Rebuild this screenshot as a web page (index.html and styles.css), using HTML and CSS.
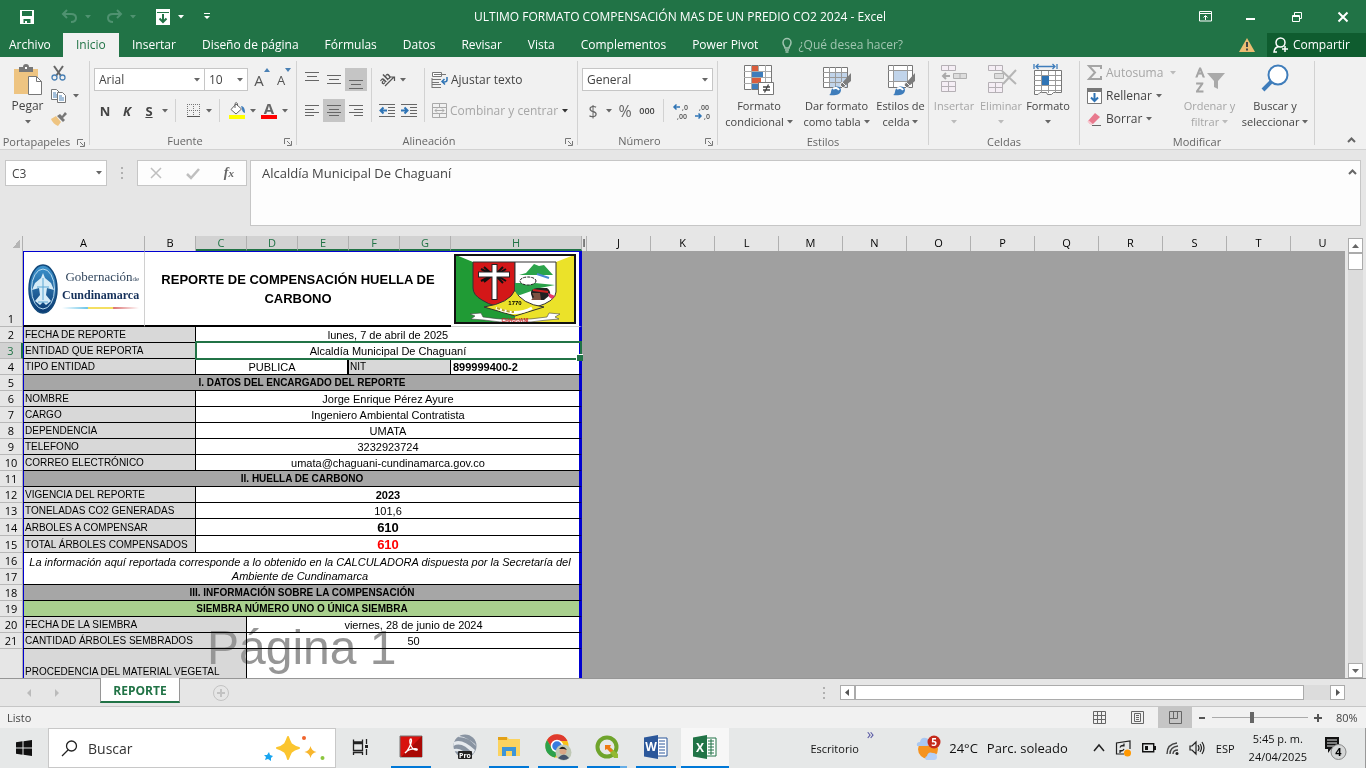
FILE: index.html
```
<!DOCTYPE html>
<html lang="es">
<head>
  <meta charset="UTF-8" />
  <meta name="viewport" content="width=device-width, initial-scale=1" />
  <title>ULTIMO FORMATO COMPENSACIÓN MAS DE UN PREDIO CO2 2024 - Excel</title>
  <link rel="stylesheet" href="styles.css">
</head>
<body>
  <!-- Shared icons -->
  <svg class="sprite" aria-hidden="true">
    <symbol id="down" viewBox="0 0 6 4"><path d="M0 0h6L3 3.500z" fill="currentColor"/></symbol>
    <symbol id="launcher" viewBox="0 0 8 8"><path d="M.5 6V.5H6M3 3l3.500 3.500M7.500 3v4.500H3" fill="none" stroke="#777"/></symbol>
    <symbol id="brush" viewBox="0 0 30 30"><path d="M28 7v8l-6 5-3-3z" fill="#7d7d7d"/><path d="M19 16l4 4-3 2-3-3z" fill="#777" stroke="#f1f1f1"/><path d="M6 29c3-1 1-5 4-7 4-3 8-1 8 2 0 5-7 6-12 5z" fill="#3f7dbb"/><path d="M10 23c2-2 5-1 6 1" stroke="#fff" stroke-width="2" fill="none"/></symbol>
  </svg>

  <div class="app">
    <header class="titlebar">
      <div class="quick">
        <button class="q-save" aria-label="Guardar"><svg width="14" height="14" viewBox="0 0 14 14"><path d="M0 0h14v14H0z" fill="#fff"/><path d="M2 1h10v5H2zM3.500 9h7v4h-7z" fill="#217346"/><path d="M5 11h2v3H5z" fill="#fff"/></svg></button>
        <button class="q-undo" aria-label="Deshacer"><svg width="15" height="13" viewBox="0 0 15 13"><path d="M5 0L1 4l4 4M1 4h8q5 0 5 4t-5 4" fill="none" stroke="#4f9270" stroke-width="2"/></svg><svg class="dd dim"><use href="#down"/></svg></button>
        <button class="q-redo" aria-label="Rehacer"><svg width="15" height="13" viewBox="0 0 15 13"><path d="M10 0l4 4-4 4M14 4H6Q1 4 1 8t5 4" fill="none" stroke="#4f9270" stroke-width="2"/></svg><svg class="dd dim"><use href="#down"/></svg></button>
        <button class="q-down" aria-label="Rellenar"><svg width="14" height="16" viewBox="0 0 14 16"><path d="M0 0h14v16H0z" fill="#fff"/><path d="M1 3.500h12" stroke="#217346"/><path d="M7 5v8M3.500 9.500L7 13l3.500-3.500" fill="none" stroke="#217346" stroke-width="2"/></svg><svg class="dd"><use href="#down"/></svg></button>
        <button class="q-more" aria-label="Personalizar"><svg width="6" height="7" viewBox="0 0 6 7"><path d="M0 0h6v1H0zM0 3h6L3 6z" fill="#fff"/></svg></button>
      </div>
      <div class="doc-title">ULTIMO FORMATO COMPENSACIÓN MAS DE UN PREDIO CO2 2024 - Excel</div>
      <div class="window-buttons">
        <button aria-label="Opciones de cinta"><svg width="13" height="11" viewBox="0 0 13 11"><path d="M.5.5h12v9.500H.5zM.5 2.500h12M6.500 9V5M4.500 6.500l2-2 2 2" fill="none" stroke="#fff"/></svg></button>
        <button aria-label="Minimizar"><svg width="10" height="10" viewBox="0 0 10 10"><path d="M0 6h9v2H0z" fill="#fff"/></svg></button>
        <button aria-label="Restaurar"><svg width="10" height="10" viewBox="0 0 10 10"><path d="M.5 3.500h7v6h-7zM2.500 3V.5h7v6H8M0 4.500h8" fill="none" stroke="#fff"/></svg></button>
        <button aria-label="Cerrar"><svg width="10" height="10" viewBox="0 0 10 10"><path d="M.5.5l9 9M9.500.5l-9 9" stroke="#fff" stroke-width="2"/></svg></button>
      </div>
    </header>

    <nav class="tabs">
      <a href="#" class="file">Archivo</a>
      <a href="#" class="active">Inicio</a>
      <a href="#">Insertar</a>
      <a href="#">Diseño de página</a>
      <a href="#">Fórmulas</a>
      <a href="#">Datos</a>
      <a href="#">Revisar</a>
      <a href="#">Vista</a>
      <a href="#">Complementos</a>
      <a href="#">Power Pivot</a>
      <a href="#" class="tell"><svg width="10" height="15" viewBox="0 0 10 15"><path d="M3 10C3 8 1 7.500 1 4.500a4 4 0 018 0C9 7.500 7 8 7 10zM3 12h4M3.500 14h3" fill="none" stroke="#a0c5b0" stroke-width="1.500"/></svg>¿Qué desea hacer?</a>
      <span class="warn"><svg width="16" height="14" viewBox="0 0 16 14"><path d="M8 0l8 14H0z" fill="#edbd73"/><path d="M7 4h2v5H7zM7 10.500h2v2H7z" fill="#444"/></svg></span>
      <button class="share"><svg width="16" height="16" viewBox="0 0 16 16"><circle cx="7.500" cy="5.500" r="4.500" fill="none" stroke="#fff" stroke-width="1.500"/><path d="M5.500 9.500Q1.500 10.500 1 15h3M12 9v6M9 12h6" fill="none" stroke="#fff" stroke-width="1.500"/></svg>Compartir</button>
    </nav>

    <section class="ribbon">
      <div class="group g-clip">
        <div class="tools">
          <button class="big paste"><svg width="30" height="32" viewBox="0 0 30 32"><path d="M1 5h24v25H1z" fill="#eec481"/><path d="M6 8V3h4q0-3 3-3t3 3h4v5z" fill="#777"/><path d="M12 3h2v2h-2z" fill="#fff"/><path d="M15.500 12.500h8l5 5v13h-13z" fill="#fff" stroke="#777"/><path d="M23.500 12.500v5h5" fill="none" stroke="#777"/></svg><span>Pegar</span><svg class="dd"><use href="#down"/></svg></button>
          <div class="stack">
            <button aria-label="Cortar"><svg width="16" height="16" viewBox="0 0 16 16"><path d="M3 1l7 10M12 1L5 11" stroke="#666" stroke-width="2"/><circle cx="3.500" cy="12.500" r="2.500" fill="none" stroke="#4a80b4" stroke-width="1.300"/><circle cx="11.500" cy="12.500" r="2.500" fill="none" stroke="#4a80b4" stroke-width="1.300"/></svg></button>
            <button aria-label="Copiar"><svg width="16" height="14" viewBox="0 0 16 14"><path d="M.5.5h5l3 3v7h-8z" fill="#fff" stroke="#777"/><path d="M2 4h3M2 6h4M2 8h4" stroke="#4a80b4"/><path d="M6.500 3.500h5l3 3v7h-8z" fill="#fff" stroke="#777"/><path d="M8 7h3M8 9h5M8 11h5" stroke="#4a80b4"/></svg><svg class="dd"><use href="#down"/></svg></button>
            <button aria-label="Copiar formato"><svg width="16" height="14" viewBox="0 0 16 14"><path d="M0 7l5-3 5 6-3 4q-5-2-7-7z" fill="#eec481"/><path d="M6 4l6 6 2-2-2-2 4-4-2-2-3 4-2-2z" fill="#777"/></svg></button>
          </div>
        </div>
        <div class="caption">Portapapeles<svg class="launch"><use href="#launcher"/></svg></div>
      </div>

      <div class="group g-font">
        <div class="tools rows">
          <div class="row">
            <select class="box font-name" aria-label="Fuente"><option>Arial</option></select><select class="box font-size" aria-label="Tamaño"><option>10</option></select>
            <button class="grow" aria-label="Aumentar fuente">A<svg width="6" height="4" viewBox="0 0 6 4"><path d="M0 4h6L3 0z" fill="#4a80b4"/></svg></button>
            <button class="grow small" aria-label="Reducir fuente">A<svg width="6" height="4" viewBox="0 0 6 4"><path d="M0 0h6L3 4z" fill="#4a80b4"/></svg></button>
          </div>
          <div class="row">
            <button class="w22"><b>N</b></button><button class="w22"><b><i>K</i></b></button><button class="w22"><b><u>S</u></b></button><button class="w10"><svg class="dd"><use href="#down"/></svg></button>
            <i class="sep"></i>
            <button class="w22" aria-label="Bordes"><svg width="13" height="13" viewBox="0 0 13 13"><path d="M.5 0v12M6.500 0v12M12.500 0v12M0 .5h12M0 6.500h12" stroke="#777" stroke-dasharray="1 1" fill="none"/><path d="M0 12.500h13" stroke="#555"/></svg></button><button class="w10"><svg class="dd"><use href="#down"/></svg></button>
            <i class="sep"></i>
            <button class="w22" aria-label="Color de relleno"><svg width="17" height="17" viewBox="0 0 17 17"><path d="M7 2l5.500 5L7 12 2 7.500z" fill="#fff" stroke="#666"/><path d="M6 6V1.500Q7-.5 8.500 1.500V4" fill="none" stroke="#666"/><path d="M12 4q4 0 4 7-3-1-3-4z" fill="#3f7dbb"/><path d="M0 13h16v4H0z" fill="#ff0"/></svg></button><button class="w10"><svg class="dd"><use href="#down"/></svg></button>
            <button class="w22 font-color"><b>A</b></button><button class="w10"><svg class="dd"><use href="#down"/></svg></button>
          </div>
        </div>
        <div class="caption">Fuente<svg class="launch"><use href="#launcher"/></svg></div>
      </div>

      <div class="group g-align">
        <div class="tools">
          <div class="rows">
            <div class="row">
              <button class="w22" aria-label="Superior"><svg width="14" height="20" viewBox="0 0 14 20"><path d="M0 2.500h14M2 6.500h10M0 10.500h14" stroke="#666"/></svg></button>
              <button class="w22" aria-label="Medio"><svg width="14" height="9" viewBox="0 0 14 9"><path d="M0 .5h14M2 4.500h10M0 8.500h14" stroke="#666"/></svg></button>
              <button class="w22 on" aria-label="Inferior"><svg width="14" height="20" viewBox="0 0 14 20"><path d="M0 10.500h14M2 14.500h10M0 18.500h14" stroke="#666"/></svg></button>
            </div>
            <div class="row">
              <button class="w22" aria-label="Izquierda"><svg width="14" height="13" viewBox="0 0 14 13"><path d="M0 1.500h14M0 5.500h9M0 8.500h14M0 11.500h9" stroke="#666"/></svg></button>
              <button class="w22 on" aria-label="Centrar"><svg width="14" height="13" viewBox="0 0 14 13"><path d="M0 1.500h14M2 5.500h10M0 8.500h14M2 11.500h10" stroke="#666"/></svg></button>
              <button class="w22" aria-label="Derecha"><svg width="14" height="13" viewBox="0 0 14 13"><path d="M0 1.500h14M5 5.500h9M0 8.500h14M5 11.500h9" stroke="#666"/></svg></button>
            </div>
          </div>
          <i class="sep tall"></i>
          <div class="rows">
            <div class="row">
              <button class="w22" aria-label="Orientación"><svg width="17" height="17" viewBox="0 0 17 17"><text x="0" y="11" transform="rotate(-45 6 8)" font-size="10" font-weight="bold" fill="#555">ab</text><path d="M6 15L15 6M11 6h4.500v4" fill="none" stroke="#555" stroke-width="1.200"/></svg></button><button class="w10"><svg class="dd"><use href="#down"/></svg></button>
            </div>
            <div class="row">
              <button class="w22" aria-label="Disminuir sangría"><svg width="16" height="13" viewBox="0 0 16 13"><path d="M0 .5h16M9 3.500h7M9 6.500h7M9 9.500h7M0 12.500h16" stroke="#666"/><path d="M8 6.500H2M4.500 3.500l-3 3 3 3" fill="none" stroke="#2f74b5" stroke-width="2"/></svg></button>
              <button class="w22" aria-label="Aumentar sangría"><svg width="16" height="13" viewBox="0 0 16 13"><path d="M0 .5h16M9 3.500h7M9 6.500h7M9 9.500h7M0 12.500h16" stroke="#666"/><path d="M0 6.500h6M3.500 3.500l3 3-3 3" fill="none" stroke="#2f74b5" stroke-width="2"/></svg></button>
            </div>
          </div>
          <i class="sep tall"></i>
          <div class="rows">
            <div class="row">
              <button class="labelled"><svg width="16" height="16" viewBox="0 0 16 16"><path d="M.5.500h9v4h-9z" fill="#fff" stroke="#777"/><path d="M2 2.500h12M0 7.500h9M0 10.500h7M0 12.500h9M0 15.500h9M0 6v10" stroke="#777"/><path d="M15 5v3q0 2-3 2h-2M12.500 7L10 9.500l3 3" fill="none" stroke="#2f74b5" stroke-width="1.500"/></svg>Ajustar texto</button>
            </div>
            <div class="row">
              <button class="labelled off"><svg width="15" height="15" viewBox="0 0 15 15"><path d="M.5.5h14v14H.5zM.5 4.500h14M.5 10.500h14M7.500 0v4M7.500 11v4M3 7.500h9M5 5.500l-2 2 2 2M10 5.500l2 2-2 2" fill="none" stroke="#aaa"/></svg>Combinar y centrar</button><button class="w10"><svg class="dd dark"><use href="#down"/></svg></button>
            </div>
          </div>
        </div>
        <div class="caption">Alineación<svg class="launch"><use href="#launcher"/></svg></div>
      </div>

      <div class="group g-number">
        <div class="tools rows">
          <div class="row"><select class="box format" aria-label="Formato de número"><option>General</option></select></div>
          <div class="row">
            <button class="w22 sign">$</button><button class="w10"><svg class="dd"><use href="#down"/></svg></button>
            <button class="w22 sign">%</button><button class="w22 zeros">000</button>
            <i class="sep"></i>
            <button class="w22 decimals"><svg width="17" height="18" viewBox="0 0 17 18"><path d="M7 5H1M3.500 2.500L1 5l2.500 2.500" fill="none" stroke="#2f74b5" stroke-width="1.500"/><text x="9" y="8">,0</text><text x="4" y="17">,00</text></svg></button>
            <button class="w22 decimals"><svg width="17" height="18" viewBox="0 0 17 18"><path d="M0 14h6M3.500 11.500L6 14l-2.500 2.500" fill="none" stroke="#2f74b5" stroke-width="1.500"/><text x="4" y="8">,00</text><text x="9" y="17">,0</text></svg></button>
          </div>
        </div>
        <div class="caption">Número<svg class="launch"><use href="#launcher"/></svg></div>
      </div>

      <div class="group g-styles">
        <div class="tools">
          <button class="big"><svg width="30" height="32" viewBox="0 0 30 32"><path d="M.5 1.500h27v24H.5z" fill="#fff" stroke="#777"/><path d="M7.500 1v25M14.500 1v25M21.500 1v25M0 7.500h27M0 13.500h27M0 19.500h27" stroke="#aaa"/><path d="M8 2h6v5H8zM8 14h9v5H8z" fill="#da5d3c"/><path d="M8 8h11v5H8zM8 20h6v5H8z" fill="#3f7dbb"/><path d="M14.500 18.500h15v12h-15z" fill="#fff" stroke="#777"/><path d="M19 23h7M19 26h7M24.500 20.500l-4 8" stroke="#444" stroke-width="1.300"/></svg><span>Formato<br>condicional <svg class="dd"><use href="#down"/></svg></span></button>
          <button class="big"><svg width="30" height="32" viewBox="0 0 30 32"><path d="M1.500 3.500h24v20h-24z" fill="#fff" stroke="#777"/><path d="M8 9h17v14H8z" fill="#c1d4ea"/><path d="M7.500 3v20M13.500 3v20M19.500 3v20M1 8.500h24M1 13.500h24M1 18.500h24" stroke="#999"/><use href="#brush" x="1" y="2" width="30" height="30"/></svg><span>Dar formato<br>como tabla <svg class="dd"><use href="#down"/></svg></span></button>
          <button class="big"><svg width="30" height="32" viewBox="0 0 30 32"><path d="M2.500 1.500h24v22h-24z" fill="#fff" stroke="#777"/><path d="M8 7h13v10H8z" fill="#c1d4ea"/><path d="M7.500 1v22M21.500 1v22M2 6.500h24M2 17.500h24" stroke="#999"/><use href="#brush" x="1" y="2" width="30" height="30"/></svg><span>Estilos de<br>celda <svg class="dd"><use href="#down"/></svg></span></button>
        </div>
        <div class="caption">Estilos</div>
      </div>

      <div class="group g-cells">
        <div class="tools">
          <button class="big off"><svg width="30" height="32" viewBox="0 0 30 32"><path d="M2.500 1.500h14v5h-14zM9.500 1v5M2.500 17.500h14v10h-14zM2.500 22.500h14M9.500 17v10" fill="#f5eef5" stroke="#b5b0b5"/><path d="M14.500 9.500h13v5h-13zM21 9v5" fill="#ddd" stroke="#b0b0b0"/><path d="M11 12H5M7 9l-3 3 3 3" fill="none" stroke="#aaa" stroke-width="2"/></svg><span>Insertar<br><svg class="dd"><use href="#down"/></svg></span></button>
          <button class="big off"><svg width="30" height="32" viewBox="0 0 30 32"><path d="M2.500 1.500h14v5h-14zM9.500 1v5M2.500 18.500h14v10h-14zM2.500 23.500h14M9.500 18v10" fill="#f5eef5" stroke="#b5b0b5"/><path d="M8.500 9.500h9v5h-9z" fill="#ddd" stroke="#b0b0b0"/><path d="M16 7l14 13M30 6L17 20" stroke="#b5b5b5" stroke-width="2"/></svg><span>Eliminar<br><svg class="dd"><use href="#down"/></svg></span></button>
          <button class="big"><svg width="30" height="32" viewBox="0 0 30 32"><path d="M1 0v5M24 0v5M3 2.500h19M5.500 0L3 2.500 5.500 5M19.500 0L22 2.500 19.500 5" fill="none" stroke="#3f7dbb" stroke-width="1.300"/><path d="M1.500 6.500h27v22h-8l-2 2h-4l-1-2H7l-2 2H1.500z" fill="#fff" stroke="#777"/><path d="M8.500 7v22M15.500 7v22M22.500 7v22M1 11.500h27M1 16.500h27M1 21.500h27M1 26.500h27" stroke="#999"/><path d="M9 12h7v9H9z" fill="#2f74b5"/></svg><span>Formato<br><svg class="dd"><use href="#down"/></svg></span></button>
        </div>
        <div class="caption">Celdas</div>
      </div>

      <div class="group g-edit">
        <div class="tools">
          <div class="stack list">
            <button class="off"><svg width="15" height="15" viewBox="0 0 15 15"><path d="M14 4V1H2l6 6.500L2 14h12v-3" fill="none" stroke="#a5a5a5" stroke-width="2"/></svg>Autosuma<svg class="dd wide"><use href="#down"/></svg></button>
            <button><svg width="15" height="16" viewBox="0 0 15 16"><path d="M.5.5h14v15H.5z" fill="#fff" stroke="#777"/><path d="M0 0h15v4H0z" fill="#777"/><path d="M7.500 5v8M4 9.500l3.500 3.500L11 9.500" fill="none" stroke="#2f74b5" stroke-width="2"/></svg>Rellenar<svg class="dd"><use href="#down"/></svg></button>
            <button><svg width="15" height="14" viewBox="0 0 15 14"><path d="M8 1l5 4-7 7H3L1 9z" fill="#e8798d"/><path d="M1 9l4 3.500" stroke="#f7c6cf" stroke-width="2"/><path d="M5 13.500h9" stroke="#666"/></svg>Borrar<svg class="dd"><use href="#down"/></svg></button>
          </div>
          <button class="big off"><svg width="30" height="32" viewBox="0 0 30 32"><text x="1" y="13" class="az">A</text><text x="1" y="28" class="az">Z</text><path d="M12 9h18l-7 8v8l-4-2v-6z" fill="#aaa"/></svg><span>Ordenar y<br>filtrar <svg class="dd"><use href="#down"/></svg></span></button>
          <button class="big"><svg width="30" height="32" viewBox="0 0 30 32"><path d="M12 17L3 26" stroke="#3f7dbb" stroke-width="4"/><circle cx="18" cy="11" r="9.500" fill="#fff" stroke="#3f7dbb" stroke-width="2"/></svg><span>Buscar y<br>seleccionar <svg class="dd"><use href="#down"/></svg></span></button>
        </div>
        <div class="caption">Modificar</div>
      </div>
      <button class="collapse" aria-label="Contraer"><svg width="9" height="6" viewBox="0 0 9 6"><path d="M1 5l3.500-3.500L8 5" fill="none" stroke="#666" stroke-width="2"/></svg></button>
    </section>

    <section class="formula-bar">
      <select class="box name-box" aria-label="Cuadro de nombres"><option>C3</option></select>
      <svg class="dots" width="2" height="12" viewBox="0 0 2 12"><path d="M0 1h2M0 6h2M0 11h2" stroke="#b0b0b0" stroke-width="2"/></svg>
      <div class="fx">
        <button aria-label="Cancelar"><svg width="12" height="10" viewBox="0 0 12 10"><path d="M1 0l10 10M11 0L1 10" stroke="#bfbfbf" stroke-width="1.500"/></svg></button>
        <button aria-label="Introducir"><svg width="14" height="11" viewBox="0 0 14 11"><path d="M1 6l4 4 8-9" fill="none" stroke="#bfbfbf" stroke-width="2.500"/></svg></button>
        <button class="fx-sign" aria-label="Insertar función">f<small>x</small></button>
      </div>
      <div class="formula">
        <input type="text" value="Alcaldía Municipal De Chaguaní" aria-label="Barra de fórmulas">
        <svg width="9" height="6" viewBox="0 0 9 6"><path d="M1 5l3.500-3.500L8 5" fill="none" stroke="#666" stroke-width="2"/></svg>
      </div>
    </section>

    <main class="workspace">
      <div class="sheet">
        <table>
          <colgroup>
            <col class="c-head"><col class="c-a"><col span="6" class="c-b"><col class="c-h"><col class="c-i"><col span="12" class="c-j">
          </colgroup>
          <thead>
            <tr>
              <th class="corner"></th><th>A</th><th>B</th><th class="sel">C</th><th class="sel">D</th><th class="sel">E</th><th class="sel">F</th><th class="sel">G</th><th class="sel">H</th><th class="tight">I</th><th>J</th><th>K</th><th>L</th><th>M</th><th>N</th><th>O</th><th>P</th><th>Q</th><th>R</th><th>S</th><th>T</th><th>U</th>
            </tr>
          </thead>
          <tbody>
            <tr class="r-title">
              <th>1</th>
              <td class="logo">
                <div class="brand">
                  <svg width="30" height="52" viewBox="0 0 30 52"><defs><linearGradient id="globe" x1="0" y1="0" x2="0" y2="1"><stop offset="0" stop-color="#3d95cf"/><stop offset="1" stop-color="#0b3a72"/></linearGradient></defs><ellipse cx="15" cy="26" rx="14" ry="24" fill="url(#globe)" stroke="#134a7c" stroke-width="1.500"/><ellipse cx="15" cy="26" rx="11.500" ry="20" fill="none" stroke="#b8dcf0"/><path d="M15 10l2 5 6 5 3 7-7-2-1 7 5 6-5 4-3-3-3 3-5-4 5-6-1-7-7 2 3-7 6-5z" fill="#d7ecf7"/><path d="M15 15v22M9 24h12M10 39h10" stroke="#5ba6d3"/></svg>
                  <div class="brand-text"><span>Gobernación<small>de</small></span><strong>Cundinamarca</strong><i></i></div>
                </div>
              </td>
              <td class="report-title" colspan="6">REPORTE DE COMPENSACIÓN HUELLA DE CARBONO</td>
              <td class="flag edge">
                <svg width="122" height="70" viewBox="0 0 122 70">
                  <path d="M0 0h61v70H0z" fill="#209b35"/><path d="M61 0h61v70H61z" fill="#ebe229"/>
                  <path d="M2 1h118l-18 7H19z" fill="#fff"/>
                  <path d="M19 8h42v47Q40 54 28 46 19 41 19 34z" fill="#d41718" stroke="#333"/>
                  <path d="M61 8h41v30q0 9-20 15l-21 3z" fill="#fff" stroke="#333"/>
                  <path d="M30 53Q56 49 61 36 67 50 90 53L61 62z" fill="#ebe229" stroke="#333"/>
                  <path d="M27 15l12 6-12 6M52 15l-10 6 10 6M30 13l9 8-9 7M49 13l-8 8 8 8" fill="none" stroke="#111" stroke-width="2"/>
                  <path d="M40.500 10v36M24 20.500h32" stroke="#222" stroke-width="6"/><path d="M40.500 11v34M25 20.500h30" stroke="#fff" stroke-width="4"/>
                  <path d="M65 21l7-2 8-9 5 2 5-1 9 10z" fill="#2ba34a"/><path d="M83 20l12 4" stroke="#4786d2" stroke-width="2"/>
                  <path d="M61 29h20l20 2-15 3-20 7q-4 0-5-5z" fill="#2ba34a"/><ellipse cx="74" cy="27" rx="8" ry="4" fill="#fff" stroke="#222" stroke-dasharray="3 1"/>
                  <path d="M77 40q-1-5 6-6l10 0q4 3 3 7l-6 5h-7l-4 0z" fill="#222"/><path d="M78 39h8l1 7h-10l3-3z" fill="#7c5142"/><path d="M79 36l15 2" stroke="#c22" stroke-width="2"/><path d="M94 39l7 3-3 3-3-2z" fill="#e8396b"/>
                  <path d="M42 54q19 9 36 0" stroke="#fff" stroke-width="3" fill="none"/><path d="M43 54q10 4 17 4" stroke="#b8a22a" stroke-width="2" stroke-dasharray="3 2" fill="none"/>
                  <path d="M16 60l11-1 2 4q32 5 64 0l2-4 11 1-5 3 4 2-12 1q-32 5-63 0l-13-1 4-3z" fill="#fff" stroke="#444" stroke-width=".6"/>
                  <text x="61" y="51" class="flag-year">1770</text><text x="61" y="68" class="flag-name">CHAGUANI</text>
                  <path d="M1 1h120v68H1z" fill="none" stroke="#111" stroke-width="2"/>
                </svg>
              </td>
              <td class="void" colspan="13" rowspan="22"></td>
            </tr>
            <tr><th>2</th><td class="label" colspan="2">FECHA DE REPORTE</td><td class="edge" colspan="6">lunes, 7 de abril de 2025</td></tr>
            <tr><th class="sel">3</th><td class="label" colspan="2">ENTIDAD QUE REPORTA</td><td class="edge current" colspan="6">Alcaldía Municipal De Chaguaní</td></tr>
            <tr><th>4</th><td class="label" colspan="2">TIPO ENTIDAD</td><td class="thick" colspan="3">PUBLICA</td><td class="label" colspan="2">NIT</td><td class="edge nit">899999400-2</td></tr>
            <tr><th>5</th><td class="section edge" colspan="8">I. DATOS DEL ENCARGADO DEL REPORTE</td></tr>
            <tr><th>6</th><td class="label" colspan="2">NOMBRE</td><td class="edge" colspan="6">Jorge Enrique Pérez Ayure</td></tr>
            <tr><th>7</th><td class="label" colspan="2">CARGO</td><td class="edge" colspan="6">Ingeniero Ambiental Contratista</td></tr>
            <tr><th>8</th><td class="label" colspan="2">DEPENDENCIA</td><td class="edge" colspan="6">UMATA</td></tr>
            <tr><th>9</th><td class="label" colspan="2">TELEFONO</td><td class="edge" colspan="6">3232923724</td></tr>
            <tr><th>10</th><td class="label" colspan="2">CORREO ELECTRÓNICO</td><td class="edge" colspan="6">umata@chaguani-cundinamarca.gov.co</td></tr>
            <tr><th>11</th><td class="section edge" colspan="8">II. HUELLA DE CARBONO</td></tr>
            <tr><th>12</th><td class="label" colspan="2">VIGENCIA DEL REPORTE</td><td class="edge" colspan="6"><b>2023</b></td></tr>
            <tr><th>13</th><td class="label" colspan="2">TONELADAS CO2 GENERADAS</td><td class="edge" colspan="6">101,6</td></tr>
            <tr class="r-total"><th>14</th><td class="label" colspan="2">ARBOLES A COMPENSAR</td><td class="edge total" colspan="6">610</td></tr>
            <tr class="r-total"><th>15</th><td class="label" colspan="2">TOTAL ÁRBOLES COMPENSADOS</td><td class="edge total red" colspan="6">610</td></tr>
            <tr><th>16</th><td class="note edge" colspan="8" rowspan="2">La información aquí reportada corresponde a lo obtenido en la CALCULADORA dispuesta por la Secretaría del Ambiente de Cundinamarca</td></tr>
            <tr><th>17</th></tr>
            <tr><th>18</th><td class="section edge" colspan="8">III. INFORMACIÓN SOBRE LA COMPENSACIÓN</td></tr>
            <tr><th>19</th><td class="section green edge" colspan="8">SIEMBRA NÚMERO UNO O ÚNICA SIEMBRA</td></tr>
            <tr><th>20</th><td class="label" colspan="3">FECHA DE LA SIEMBRA</td><td class="edge" colspan="5">viernes, 28 de junio de 2024</td></tr>
            <tr><th>21</th><td class="label" colspan="3">CANTIDAD ÁRBOLES SEMBRADOS</td><td class="edge" colspan="5">50</td></tr>
            <tr class="r-last"><th></th><td class="label" colspan="3">PROCEDENCIA DEL MATERIAL VEGETAL</td><td class="edge" colspan="5"></td></tr>
          </tbody>
        </table>
        <div class="watermark">Página 1</div>
      </div>
      <div class="v-scroll">
        <button aria-label="Subir"><svg width="7" height="4" viewBox="0 0 7 4"><path d="M0 4h7L3.500 0z" fill="#666"/></svg></button>
        <i class="thumb"></i>
        <button class="end" aria-label="Bajar"><svg width="7" height="4" viewBox="0 0 7 4"><path d="M0 0h7L3.500 4z" fill="#666"/></svg></button>
      </div>
    </main>

    <div class="sheet-tabs">
      <button class="nav" aria-label="Anterior"><svg width="4" height="8" viewBox="0 0 4 8"><path d="M4 0v8L0 4z" fill="#bbb"/></svg></button>
      <button class="nav" aria-label="Siguiente"><svg width="4" height="8" viewBox="0 0 4 8"><path d="M0 0v8l4-4z" fill="#bbb"/></svg></button>
      <a href="#" class="sheet-tab">REPORTE</a>
      <button class="add" aria-label="Hoja nueva"><svg width="16" height="16" viewBox="0 0 16 16"><circle cx="8" cy="8" r="7.500" fill="none" stroke="#c3c3c3"/><path d="M8 4v8M4 8h8" stroke="#c3c3c3" stroke-width="2"/></svg></button>
      <svg class="dots" width="2" height="12" viewBox="0 0 2 12"><path d="M0 1h2M0 6h2M0 11h2" stroke="#b0b0b0" stroke-width="2"/></svg>
      <div class="h-scroll">
        <button aria-label="Izquierda"><svg width="4" height="7" viewBox="0 0 4 7"><path d="M4 0v7L0 3.500z" fill="#555"/></svg></button>
        <i class="thumb"></i>
        <button aria-label="Derecha"><svg width="4" height="7" viewBox="0 0 4 7"><path d="M0 0v7l4-3.500z" fill="#555"/></svg></button>
      </div>
    </div>

    <footer class="status">
      <span class="ready">Listo</span>
      <button class="view" aria-label="Normal"><svg width="13" height="13" viewBox="0 0 13 13"><path d="M.5.5h12v12H.5zM4.500 0v13M8.500 0v13M0 4.500h13M0 8.500h13" fill="none" stroke="#666"/></svg></button>
      <button class="view" aria-label="Diseño de página"><svg width="13" height="13" viewBox="0 0 13 13"><path d="M.5.5h12v12H.5zM3.500 2.500h6v8h-6zM5 4.500h3M5 6.500h3M5 8.500h3" fill="none" stroke="#666"/></svg></button>
      <button class="view on" aria-label="Saltos de página"><svg width="13" height="13" viewBox="0 0 13 13"><path d="M.5.5h12v12H.5zM.5 7.500h8v-7M4.500 0v7" fill="none" stroke="#666"/></svg></button>
      <button class="zoom-step" aria-label="Alejar"><svg width="6" height="8" viewBox="0 0 6 8"><path d="M0 4h6" stroke="#555" stroke-width="2"/></svg></button>
      <input type="range" min="0" max="100" value="41" aria-label="Zoom">
      <button class="zoom-step" aria-label="Acercar"><svg width="8" height="8" viewBox="0 0 8 8"><path d="M0 4h8M4 0v8" stroke="#555" stroke-width="2"/></svg></button>
      <span class="percent">80%</span>
    </footer>

    <footer class="taskbar">
      <button class="start" aria-label="Inicio"><svg width="16" height="16" viewBox="0 0 16 16"><path d="M0 2.300L6.500 1.300v6.200H0zM7.500 1.200L16 0v7.500H7.500zM0 8.500h6.500v6.200L0 13.700zM7.500 8.500H16V16l-8.500-1.200z" fill="#111"/></svg></button>
      <label class="search">
        <svg width="17" height="17" viewBox="0 0 17 17"><circle cx="10.500" cy="6" r="5" fill="none" stroke="#222" stroke-width="1.300"/><path d="M7 10l-6 6" stroke="#222" stroke-width="1.300"/></svg>
        <input type="text" placeholder="Buscar" aria-label="Buscar">
        <svg width="62" height="26" viewBox="0 0 62 26"><path d="M24 2q1 3 3 7 4 3 8 4-5 1-8 4-2 4-3 7-1-4-3-7-4-3-8-4 5-1 8-4 2-4 3-7z" fill="#fbc52f" stroke="#fbc52f" stroke-width="2" stroke-linejoin="round"/><path d="M46.500 11q1 5 6 6-5 1-6 6-1-5-6-6 5-1 6-6z" fill="#f8b62d"/><path d="M5 17l1 3 3 1-2 2v3l-3-2-3 1 1-3-2-2h3z" fill="#18a5f0"/><circle cx="40" cy="3" r="2" fill="#f0642c"/><circle cx="58.500" cy="23" r="2" fill="#8cc63f"/></svg>
      </label>
      <div class="apps">
        <button aria-label="Vista de tareas"><svg width="17" height="16" viewBox="0 0 17 16"><path d="M1.500.500v2.500h9V.500M1.500 4.500h9v7h-9zM1.500 16v-2.500h9V16M14.500 0v5M14.500 10v6" fill="none" stroke="#222" stroke-width="1.300"/><path d="M13 6h3v3h-3z" fill="#222"/></svg></button>
        <button class="open" aria-label="Acrobat"><svg width="24" height="24" viewBox="0 0 24 24"><path d="M1 1h22v21H1z" fill="#d8110e" stroke="#777"/><path d="M23 1v21H2z" fill="#a90805"/><path d="M6 18c3-2 8-12 6-14-3 0 0 12 6 11 2-2-8-2-12 3z" fill="none" stroke="#fff" stroke-width="1.300"/></svg></button>
        <button aria-label="Google Earth Pro"><svg width="24" height="26" viewBox="0 0 24 26"><circle cx="12" cy="12" r="11.500" fill="#8994a2"/><path d="M1 8Q9 4 22 16l-2 4Q9 7 .5 12zM5 3q9 0 17 7l1 2Q15 3 6 2zM1 15q8-2 14 8l-3 1Q8 17 1 17z" fill="#e6eaee"/><rect x="5" y="17" width="14" height="8" rx="1" fill="#222"/><text x="12" y="24" class="pro">Pro</text></svg></button>
        <button class="open" aria-label="Explorador"><svg width="22" height="20" viewBox="0 0 22 20"><path d="M0 0h9l2 2h11v17H0z" fill="#fbd35f"/><path d="M0 0h9v3H0z" fill="#e3a117"/><path d="M4 10h14v9h-4v-5H8v5H4z" fill="#3d95d8"/></svg></button>
        <button class="open" aria-label="Chrome"><svg width="27" height="27" viewBox="0 0 27 27"><circle cx="12" cy="12" r="11.500" fill="#fbc116"/><path d="M2 6a11.500 11.500 0 0120.500 1H12L7 15z" fill="#df3a2f"/><path d="M2 6l6 10 5 1-3 6.500A11.500 11.500 0 012 6z" fill="#2ca14c"/><circle cx="12" cy="12" r="5.500" fill="#367be0" stroke="#fff" stroke-width="1.500"/><circle cx="18.500" cy="18.500" r="8" fill="#bfc8b5"/><path d="M13 24q6-7 11 0-5 4-11 0z" fill="#44546b"/><circle cx="18" cy="17" r="3.500" fill="#d8a685"/><path d="M14 15q4-5 8 1l-3-1z" fill="#222"/></svg></button>
        <button class="open partial" aria-label="QGIS"><svg width="24" height="24" viewBox="0 0 24 24"><circle cx="12" cy="12" r="9.500" fill="none" stroke="#6fa42c" stroke-width="4"/><path d="M13 14l3-1 7 6v4h-4z" fill="#93b932"/><path d="M10 10h6l-1 2 3 4-3 1-3-3-2 1z" fill="#ee7913"/></svg></button>
        <button class="open" aria-label="Word"><svg width="24" height="24" viewBox="0 0 24 24"><path d="M12 3h11v18H12z" fill="#fff" stroke="#2b579a"/><path d="M15 6h6M15 9h6M15 12h6M15 15h6M15 18h6" stroke="#2b579a"/><path d="M0 2.500L14 0v24L0 21.500z" fill="#2b579a"/><text x="7" y="16" class="letter">W</text></svg></button>
        <button class="open focus" aria-label="Excel"><svg width="24" height="24" viewBox="0 0 24 24"><path d="M12 3h11v18H12z" fill="#fff" stroke="#217346"/><path d="M15 6h6M15 9h6M15 12h6M15 15h6M15 18h6M18 4v16" stroke="#217346"/><path d="M0 2.500L14 0v24L0 21.500z" fill="#217346"/><text x="7" y="17" class="letter">X</text></svg></button>
      </div>
      <div class="tray">
        <span class="desk">Escritorio</span>
        <span class="chevrons">»</span>
        <button class="weather"><svg width="26" height="26" viewBox="0 0 26 26"><circle cx="12" cy="14" r="10" fill="#f59321"/><path d="M1 11q-1-4 3-4 1-5 6-4 4 1 4 5 0 3-3 3z" fill="#a9c8f2"/><path d="M10 25q-2-3 1-4 1-5 6-3 4 0 4 4 0 3-3 3z" fill="#b5d0f7"/><circle cx="18" cy="7" r="6.500" fill="#c42b1c"/><text x="18" y="11" class="badge">5</text></svg><span>24°C</span><span>Parc. soleado</span></button>
        <div class="tray-icons">
          <svg width="12" height="8" viewBox="0 0 12 8"><path d="M1 7l5-6 5 6" fill="none" stroke="#222" stroke-width="1.500"/></svg>
          <svg width="17" height="17" viewBox="0 0 17 17"><path d="M9 14H1.500V3L15 1v8" fill="none" stroke="#222" stroke-width="1.200"/><path d="M5 7.500q1-2.500 4-2M9 3.500v2.500H6.500M9 9q-1 2.500-4 2M5 13v-2.500h2.500" fill="none" stroke="#222" stroke-width="1.200"/><circle cx="12.500" cy="13" r="3.500" fill="#ff9800"/></svg>
          <svg width="14" height="10" viewBox="0 0 14 10"><path d="M.7.7h11v8H.7z" fill="none" stroke="#111" stroke-width="1.400"/><path d="M12 3h2v4h-2zM3 3h3v4H3z" fill="#111"/></svg>
          <svg width="13" height="13" viewBox="0 0 13 13"><path d="M1 12Q1 2 11 1M4 12q0-7 8-8M7 12q0-4 5-4" fill="none" stroke="#444" stroke-width="1.400"/><circle cx="11" cy="11.500" r="1.500" fill="#222"/></svg>
          <svg width="16" height="14" viewBox="0 0 16 14"><path d="M1 5h2l4-4v12L3 9H1zM9 4q2 3 0 6M11 3q3 4 0 8M13 1q4 6 0 12" fill="none" stroke="#222" stroke-width="1.200"/></svg>
        </div>
        <span class="lang">ESP</span>
        <time>5:45 p. m.<br>24/04/2025</time>
        <button class="notes" aria-label="Notificaciones"><svg width="25" height="26" viewBox="0 0 25 26"><path d="M1 2h14v12H7l-3 4v-4H1z" fill="#111"/><path d="M3 5h10M3 8h10M3 11h7" stroke="#e6e8e8"/><circle cx="14.500" cy="17" r="7.500" fill="#d4d6d6" stroke="#888"/><text x="14.500" y="21" class="count">4</text></svg></button>
      </div>
    </footer>
  </div>
</body>
</html>
```

FILE: styles.css
```
/* Base styles */
* {
  box-sizing: border-box;
}

body {
  margin: 0;
  font-family: "Open Sans", "Noto Sans", sans-serif;
  font-size: 12px;
  color: #444;
  background: #e6e6e6;
}

button {
  display: flex;
  align-items: center;
  justify-content: center;
  flex-shrink: 0;
  padding: 0;
  border: none;
  background: none;
  font: inherit;
  color: inherit;
}

a {
  color: inherit;
  text-decoration: none;
}

svg {
  flex-shrink: 0;
  overflow: visible;
}

.sprite {
  display: none;
}

.app {
  display: flex;
  flex-direction: column;
  height: 100vh;
  overflow: hidden;
}

.dd {
  width: 6px;
  height: 4px;
  color: #666;
}

.dd.dark {
  color: #333;
}

/* Title bar */
.titlebar {
  display: grid;
  grid-template-columns: 1fr auto 1fr;
  align-items: center;
  height: 33px;
  flex-shrink: 0;
  background: #217346;
  color: #fff;
}

.doc-title {
  padding-right: 6px;
}

.quick {
  display: flex;
  align-items: center;
  gap: 16px;
  padding-left: 20px;
}

.quick button {
  gap: 8px;
}

.quick .dd {
  color: #fff;
}

.quick .dd.dim {
  color: #4f9270;
}

.q-undo {
  margin-left: 12px;
}

.q-down,
.q-more {
  margin-left: 4px;
}

.window-buttons {
  display: flex;
  justify-content: flex-end;
}

.window-buttons button {
  width: 46px;
  height: 30px;
}

/* Ribbon tabs */
.tabs {
  display: flex;
  height: 24px;
  flex-shrink: 0;
  background: #217346;
  color: #fff;
  line-height: 24px;
}

.tabs a {
  padding: 0 13px;
  white-space: nowrap;
}

.tabs .file {
  width: 63px;
  padding: 0 9px;
}

.tabs .active {
  width: 56px;
  background: #f1f1f1;
  color: #217346;
}

.tabs .tell {
  display: flex;
  align-items: center;
  gap: 6px;
  padding-left: 11px;
  color: #a0c5b0;
}

.warn {
  display: flex;
  align-items: center;
  margin-left: auto;
  padding-right: 12px;
}

.share {
  gap: 4px;
  width: 99px;
  padding-right: 10px;
  background: #0f5c2f;
}

/* Ribbon */
.ribbon {
  display: flex;
  height: 93px;
  flex-shrink: 0;
  padding: 4px 0;
  background: #f1f1f1;
  border-bottom: 1px solid #d2d2d2;
}

.group {
  display: flex;
  flex-direction: column;
  flex-shrink: 0;
  border-right: 1px solid #d2d2d2;
}

.tools {
  display: flex;
  flex: 1;
}

.caption {
  position: relative;
  height: 16px;
  line-height: 24px;
  font-size: 11px;
  text-align: center;
  color: #666;
}

.launch {
  position: absolute;
  right: 4px;
  top: 9px;
  width: 8px;
  height: 8px;
}

.rows {
  display: flex;
  flex-direction: column;
  gap: 8px;
  padding-top: 7px;
}

.row {
  display: flex;
  align-items: center;
  height: 23px;
}

.row button {
  height: 23px;
}

.w22 {
  width: 22px;
}

.w10 {
  width: 10px;
}

.on {
  background: #c5c5c5;
}

.off {
  color: #a6a6a6;
}

.off .dd {
  color: #bbb;
}

.sep {
  width: 1px;
  height: 23px;
  margin: 0 6px 0 5px;
  background: #d2d2d2;
}

.sep.tall {
  height: 54px;
  margin: 7px 4px 0;
}

.box {
  appearance: none;
  height: 23px;
  padding: 0 4px;
  border: 1px solid #c6c6c6;
  border-radius: 0;
  background: #fff url("data:image/svg+xml,%3Csvg xmlns='http://www.w3.org/2000/svg' width='6' height='4'%3E%3Cpath d='M0 0h6L3 3.500z' fill='%23666'/%3E%3C/svg%3E") no-repeat right 4px center;
  font: inherit;
  color: #444;
}

.big {
  flex-direction: column;
  justify-content: flex-start;
  padding-top: 3px;
  font-size: 11px;
  line-height: 16px;
}

.big.paste {
  font-size: 12px;
}

.big span {
  margin-top: 2px;
  white-space: nowrap;
}

.big span .dd {
  vertical-align: 2px;
}

.big > .dd {
  margin-top: 6px;
}

.stack {
  display: flex;
  flex-direction: column;
}

.stack button {
  justify-content: flex-start;
  height: 23px;
  gap: 6px;
}

.g-clip {
  width: 90px;
}

.g-clip .big {
  width: 51px;
  padding-left: 4px;
}

.g-clip .caption {
  padding-right: 16px;
}

.g-font {
  width: 207px;
}

.g-font .tools,
.g-number .tools {
  padding-left: 4px;
}

.g-font .caption,
.g-align .caption,
.g-number .caption {
  padding-right: 16px;
}

.font-name {
  width: 111px;
}

.font-size {
  width: 43px;
  border-left: none;
}

.grow {
  align-items: flex-start;
  width: 24px;
  margin-left: 2px;
  font-size: 15px;
  line-height: 24px;
  color: #555;
}

.grow.small {
  margin-left: -2px;
  font-size: 13px;
}

.row b {
  font-size: 13px;
}

.font-color b {
  width: 16px;
  height: 17px;
  border-bottom: 4px solid red;
  line-height: 13px;
  font-size: 15px;
  color: #666;
}

.g-align {
  width: 281px;
}

.g-align .tools {
  padding-left: 4px;
}

.g-align .row .labelled {
  gap: 3px;
  padding-left: 3px;
}

.g-align .labelled + .w10 {
  width: 14px;
}

.g-number {
  width: 140px;
}

.format {
  width: 131px;
}

.sign {
  font-size: 16px;
  color: #666;
}

.zeros {
  font-size: 9px;
  font-weight: 600;
}

.decimals text {
  font-size: 7px;
  font-weight: 600;
  fill: #555;
}

.az {
  font-size: 13px;
  fill: #a5a5a5;
  stroke: #a5a5a5;
  stroke-width: 1px;
}

.g-styles {
  width: 211px;
}

.g-styles .big {
  width: 73px;
}

.g-styles .big:first-child {
  width: 82px;
}

.g-styles .big:last-child {
  width: 55px;
}

.g-cells {
  width: 151px;
}

.g-cells .big {
  width: 50px;
}

.g-cells .big:nth-child(2) {
  width: 44px;
}

.g-edit {
  width: 235px;
}

.list {
  width: 96px;
  padding-left: 7px;
}

.stack.list button {
  gap: 4px;
}

.stack.list .wide {
  margin-left: 3px;
}

.g-edit .big {
  width: 64px;
}

.g-edit .big:nth-child(2) {
  width: 67px;
}

.collapse {
  align-self: flex-end;
  width: 10px;
  height: 10px;
  margin-left: auto;
  margin-right: 10px;
}

/* Formula bar */
.formula-bar {
  display: flex;
  align-items: flex-start;
  height: 86px;
  flex-shrink: 0;
  padding: 10px 5px;
}

.name-box {
  width: 102px;
  height: 26px;
  padding-left: 6px;
}

.formula-bar .dots {
  margin: 7px 14px;
}

.fx {
  display: flex;
  justify-content: space-around;
  width: 110px;
  height: 26px;
  border: 1px solid #c6c6c6;
  background: #fdfdfd;
}

.fx-sign {
  font: italic bold 14px "Liberation Serif", serif;
  color: #666;
}

.fx-sign small {
  font-size: 11px;
}

.formula {
  display: flex;
  flex: 1;
  align-items: flex-start;
  height: 66px;
  margin-left: 3px;
  border: 1px solid #c6c6c6;
  background: #fdfdfd;
}

.formula input {
  flex: 1;
  height: 24px;
  padding: 0 11px;
  border: none;
  background: none;
  font: 13px "Open Sans", sans-serif;
  color: #444;
}

.formula svg {
  margin: 8px 3px;
}

/* Sheet */
.workspace {
  display: flex;
  flex: 1;
  min-height: 0;
}

.sheet {
  position: relative;
  flex: 1;
  min-width: 0;
  overflow: hidden;
}

table {
  table-layout: fixed;
  width: 1355px;
  border-collapse: separate;
  border-spacing: 0;
  font: 11px "Liberation Sans", Arial, sans-serif;
  color: #000;
}

.c-head { width: 23px; }
.c-a { width: 122px; }
.c-b { width: 51px; }
.c-h { width: 131px; }
.c-i { width: 5px; }
.c-j { width: 64px; }

th {
  height: 16px;
  padding: 0;
  border-right: 1px solid #b0b0b0;
  border-bottom: 1px solid #b8b8b8;
  background: #e6e6e6;
  font: 11px/14px "Open Sans", sans-serif;
  vertical-align: bottom;
}

thead th {
  height: 15px;
  line-height: 13px;
  border-bottom: none;
  vertical-align: top;
}

th.sel {
  background: #d2d2d2;
  color: #217346;
}

thead .sel {
  border-bottom: 2px solid #217346;
}

tbody th.sel {
  border-right: 2px solid #217346;
}

.corner {
  background: linear-gradient(135deg, #e6e6e6 50%, #b5b5b5 50%) 12px 4px / 8px 8px no-repeat #e6e6e6;
}

.tight {
  overflow: hidden;
}

td {
  height: 16px;
  padding: 0 0 0 1px;
  border-right: 1px solid #000;
  border-bottom: 1px solid #000;
  background: #fff;
  line-height: 14px;
  text-align: center;
  white-space: nowrap;
}

td.edge {
  border-right: 3px solid #0000d0;
}

th + td {
  border-left: 1px solid #0000d0;
}

td.label {
  padding-top: 1px;
  background: #d8d8d8;
  font-size: 10px;
  text-align: left;
}

td.section {
  padding-top: 1px;
  background: #a6a6a6;
  font-size: 10px;
  font-weight: bold;
}

td.green {
  background: #a9d08e;
}

td.thick {
  border-right-width: 2px;
}

td.nit {
  padding-left: 2px;
  font-weight: bold;
  text-align: left;
}

td.total {
  font-size: 13px;
  font-weight: bold;
}

td.red {
  color: #f00;
}

td.note {
  padding: 1px 4px 0 1px;
  font-style: italic;
  white-space: normal;
}

td.void {
  border: none;
  background: #a0a0a0;
}

.r-title th,
.r-title td {
  height: 76px;
}

.r-title td {
  border-top: 1px solid #0000d0;
  border-bottom-width: 2px;
}

.r-title .void {
  border: none;
}

td.logo {
  border-right-color: #d0d0d0;
}

td.report-title {
  padding: 0 10px;
  border-right: none;
  font-size: 13px;
  font-weight: bold;
  line-height: 19px;
  white-space: normal;
}

td.flag {
  border-bottom: 1px solid #d0d0d0;
}

.flag svg {
  display: block;
  margin: 0 auto 0 2px;
}

.flag-year {
  font-size: 6px;
  font-weight: bold;
  text-anchor: middle;
}

.flag-name {
  font-size: 5px;
  font-weight: bold;
  text-anchor: middle;
  fill: #c22;
}

.r-total th,
.r-total td {
  height: 17px;
  line-height: 15px;
}

.r-last th,
.r-last td {
  height: 31px;
  vertical-align: bottom;
}

/* Selected cell */
.current {
  position: relative;
}

.current::before {
  content: "";
  position: absolute;
  inset: -2px -3px -2px -1px;
  border: 2px solid #217346;
}

.current::after {
  content: "";
  position: absolute;
  right: -4px;
  bottom: -3px;
  width: 6px;
  height: 6px;
  border: 1px solid #fff;
  border-right: none;
  border-bottom: none;
  background: #217346;
}

.brand {
  display: flex;
  align-items: center;
  gap: 4px;
  padding-left: 3px;
}

.brand-text {
  display: flex;
  flex-direction: column;
  font: 15px/17px "Liberation Serif", serif;
  color: #33475e;
}

.brand-text span {
  font-size: 13px;
  text-align: right;
}

.brand-text small {
  font-size: 7px;
}

.brand-text strong {
  font-size: 12px;
  line-height: 15px;
  color: #14305a;
}

.brand-text i {
  height: 2px;
  margin-top: 4px;
  background: linear-gradient(90deg, #fff, #6cc5e8 33%, #f4df62 34%, #f4df62 66%, #dc7373 67%, #fff);
}

.watermark {
  position: absolute;
  left: 207px;
  top: 385px;
  font: 48px/54px "Liberation Sans", Arial, sans-serif;
  color: #969696;
  mix-blend-mode: darken;
}

/* Scroll bars */
.v-scroll {
  display: flex;
  flex-direction: column;
  width: 21px;
  padding: 2px 3px 0;
  background: linear-gradient(#dcdcdc, #dcdcdc) 3px 16px / 15px 100% no-repeat;
}

.v-scroll button,
.h-scroll button,
.thumb {
  width: 15px;
  height: 15px;
  border: 1px solid #ababab;
  background: #fff;
}

.v-scroll .thumb {
  height: 17px;
}

.v-scroll .end {
  margin-top: auto;
}

.sheet-tabs {
  display: flex;
  align-items: center;
  height: 28px;
  flex-shrink: 0;
  padding: 0 21px 0 15px;
  border-top: 1px solid #969696;
}

.nav {
  width: 28px;
}

.sheet-tab {
  align-self: flex-start;
  width: 80px;
  height: 25px;
  margin: -1px 0 0 29px;
  border: 1px solid #969696;
  border-top: none;
  border-bottom: 2px solid #217346;
  background: #fff;
  line-height: 26px;
  font-weight: bold;
  text-align: center;
  color: #217346;
}

.add {
  margin-left: 33px;
}

.sheet-tabs .dots {
  margin-left: auto;
  margin-right: 15px;
}

.h-scroll {
  display: flex;
  width: 38%;
  max-width: 509px;
  background: #dcdcdc;
}

.h-scroll .thumb {
  flex: 1;
  margin-right: 26px;
}

.sheet-tabs .dots,
.h-scroll {
  flex-shrink: 0;
}

/* Status bar */
.status {
  display: flex;
  align-items: center;
  height: 22px;
  flex-shrink: 0;
  border-top: 1px solid #c6c6c6;
  background: #f1f1f1;
  font-size: 11px;
}

.ready {
  flex: 1;
  padding-left: 7px;
}

.view {
  width: 34px;
  height: 22px;
  margin-left: 4px;
}

.zoom-step {
  width: 20px;
}

.status input {
  appearance: none;
  width: 96px;
  height: 12px;
  margin: 0;
  background: linear-gradient(#aaa, #aaa) center / 100% 1px no-repeat;
}

.status input::-webkit-slider-thumb {
  appearance: none;
  width: 4px;
  height: 11px;
  background: #666;
}

.percent {
  width: 38px;
  padding-left: 8px;
}

/* Taskbar */
.taskbar {
  display: flex;
  height: 40px;
  flex-shrink: 0;
  background: #e6e8e8;
  color: #111;
}

.start {
  width: 48px;
}

.search {
  display: flex;
  align-items: center;
  width: 288px;
  padding: 0 9px 0 12px;
  border: 1px solid #c8c8c8;
  background: #fff;
}

.search input {
  flex: 1;
  min-width: 0;
  padding: 0 10px;
  border: none;
  font: 14px "Open Sans", sans-serif;
}

.search input::placeholder {
  color: #333;
}

.apps {
  display: flex;
  align-items: stretch;
}

.apps button {
  width: 49px;
  border-bottom: 2px solid transparent;
}

.apps .open {
  width: 40px;
  margin-right: 9px;
  border-bottom-color: #0078d7;
}

.apps button:first-child {
  width: 48px;
  margin-right: 7px;
}

.apps .partial {
  border-image: linear-gradient(90deg, #0078d7 80%, #66aee7 80%) 1;
}

.apps .open:nth-child(7) {
  margin-right: 5px;
}

.apps .focus {
  width: 48px;
  margin-right: 0;
  background: #f7f7f7;
}

.pro {
  font-size: 7px;
  font-weight: bold;
  fill: #fff;
  text-anchor: middle;
}

.letter {
  font-size: 12px;
  font-weight: bold;
  fill: #fff;
  text-anchor: middle;
}

.tray {
  display: flex;
  align-items: center;
  margin-left: auto;
  padding-right: 16px;
  border-right: 1px solid #999;
}

.desk {
  font-size: 11px;
}

.chevrons {
  align-self: flex-start;
  margin-left: 8px;
  font-size: 15px;
  line-height: 10px;
  color: #5b5ba5;
}

.weather {
  gap: 7px;
  margin-left: 42px;
  font-size: 13px;
}

.weather span + span {
  margin-left: 2px;
}

.badge {
  font-size: 10px;
  font-weight: bold;
  fill: #fff;
  text-anchor: middle;
}

.tray-icons {
  display: flex;
  align-items: center;
  gap: 10px;
  margin-left: 25px;
}

.lang {
  margin-left: 11px;
  font-size: 11px;
}

time {
  margin-left: 14px;
  font-size: 11px;
  line-height: 18px;
  text-align: center;
}

.notes {
  margin-left: 17px;
}

.count {
  font-size: 11px;
  font-weight: bold;
  text-anchor: middle;
}
```
